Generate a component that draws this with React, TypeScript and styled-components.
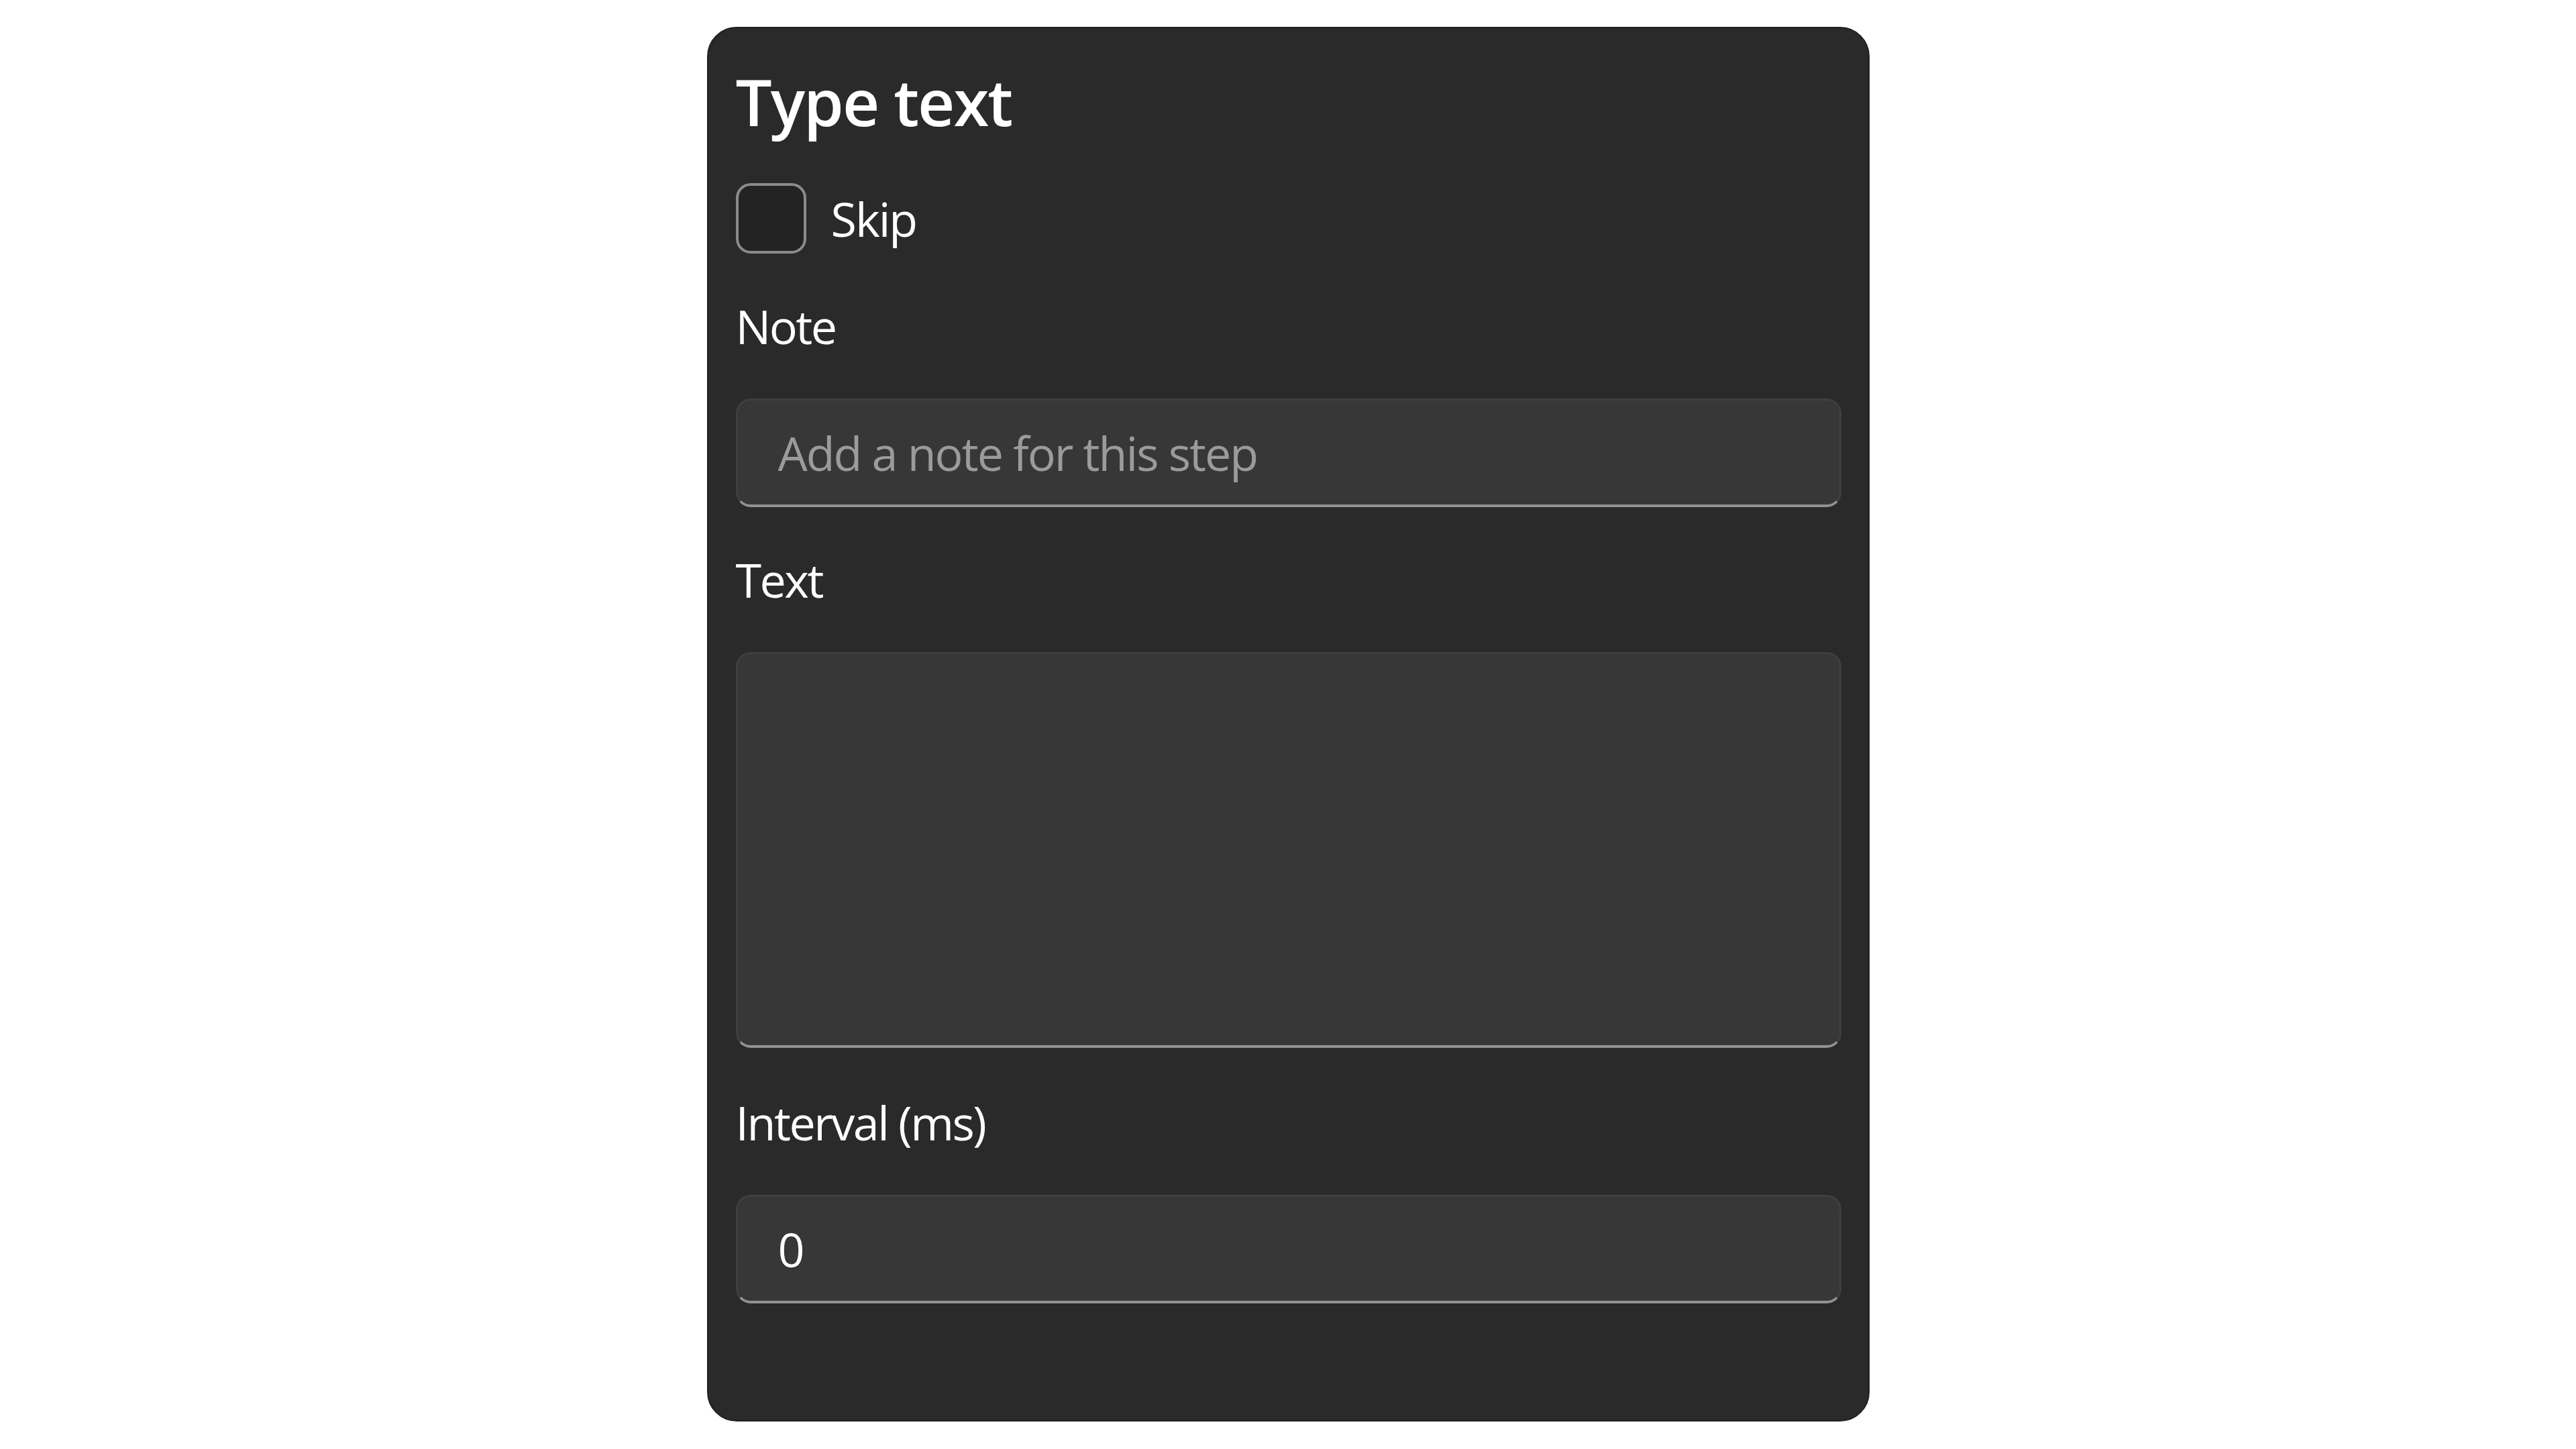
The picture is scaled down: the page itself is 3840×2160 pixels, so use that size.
import styled, { createGlobalStyle } from "styled-components";

const GlobalStyle = createGlobalStyle`
  html, body {
    margin: 0;
    padding: 0;
    background: #ffffff;
  }
  body {
    font-family: "Open Sans", "Noto Sans", sans-serif;
  }
`;

const Page = styled.div`
  display: flex;
  justify-content: center;
  padding-top: 40px;
`;

const Panel = styled.section`
  box-sizing: border-box;
  width: 1733px;
  height: 2079px;
  background: #2a2a2a;
  border: 2px solid #202020;
  border-radius: 44px;
  padding: 43px 40px 0 41px;
  display: flex;
  flex-direction: column;
  gap: 60px;
  color: #ffffff;
`;

const Title = styled.h1`
  margin: 0 0 -4px;
  font-size: 96px;
  font-weight: 600;
  line-height: 132px;
  letter-spacing: -2px;
`;

const CheckRow = styled.label`
  display: flex;
  align-items: center;
  gap: 37px;
  font-size: 70px;
  line-height: 96px;
  letter-spacing: -2px;
`;

const Box = styled.span`
  box-sizing: border-box;
  width: 105px;
  height: 105px;
  border: 4px solid #8b8b8b;
  border-radius: 22px;
  background: #232323;
  flex-shrink: 0;
`;

const Field = styled.div`
  display: flex;
  flex-direction: column;
  gap: 60px;
`;

const Label = styled.div`
  font-size: 70px;
  line-height: 96px;
  letter-spacing: -2.5px;
  margin-top: ${(p: { $shift?: number }) => p.$shift ?? 0}px;
`;

const controlStyles = `
  box-sizing: border-box;
  width: 100%;
  margin: 0;
  background: #373737;
  border: 3px solid #3f3f3f;
  border-bottom: 4px solid #929292;
  border-radius: 22px;
  color: #ffffff;
  font-family: "Open Sans", "Noto Sans", sans-serif;
  font-size: 70px;
  letter-spacing: -2px;
  padding: 0 60px;
  outline: none;
  &::placeholder {
    color: #9b9b9b;
  }
`;

const TextInput = styled.input`
  ${controlStyles}
  height: 162px;
`;

const TextArea = styled.textarea`
  ${controlStyles}
  display: block;
  height: 590px;
  resize: none;
  padding-top: 30px;
`;

export default function App() {
  return (
    <>
      <GlobalStyle />
      <Page>
        <Panel>
          <Title>Type text</Title>
          <CheckRow>
            <Box />
            Skip
          </CheckRow>
          <Field>
            <Label>Note</Label>
            <TextInput placeholder="Add a note for this step" />
          </Field>
          <Field>
            <Label>Text</Label>
            <TextArea />
          </Field>
          <Field>
            <Label $shift={3}>Interval (ms)</Label>
            <TextInput defaultValue="0" inputMode="numeric" />
          </Field>
        </Panel>
      </Page>
    </>
  );
}
